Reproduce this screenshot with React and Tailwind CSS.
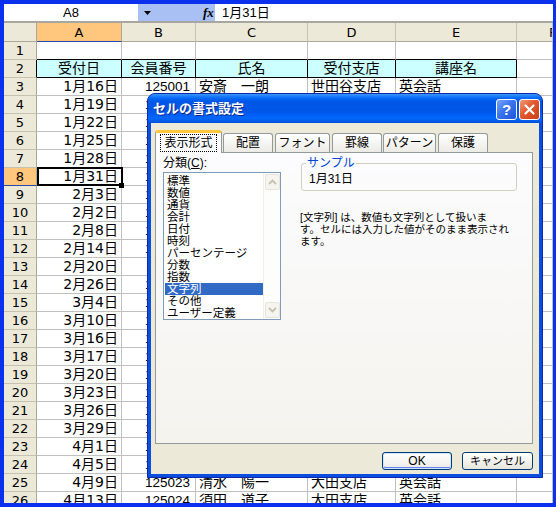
import React from 'react';
import clsx from 'clsx';

const dates = ['1月16日','1月19日','1月22日','1月25日','1月28日','1月31日','2月3日','2月2日','2月8日','2月14日','2月20日','2月26日','3月4日','3月10日','3月16日','3月17日','3月20日','3月23日','3月26日','3月29日','4月1日','4月5日','4月9日','4月13日'];
const extra = {
  3: ['安斎　一朗', '世田谷支店', '英会話'],
  25: ['清水　陽一', '大田支店', '英会話'],
  26: ['須田　道子', '大田支店', '英会話'],
};

const rows = [
  { n: 1, cells: ['', '', '', '', '', ''] },
  { n: 2, cells: ['受付日', '会員番号', '氏名', '受付支店', '講座名', ''] },
  ...dates.map((d, i) => {
    const n = i + 3;
    const e = extra[n] || ['', '', ''];
    return { n, cells: [d, String(125001 + i), e[0], e[1], e[2], ''] };
  }),
];

const cols = ['A', 'B', 'C', 'D', 'E', 'F'];
const listItems = ['標準','数値','通貨','会計','日付','時刻','パーセンテージ','分数','指数','文字列','その他','ユーザー定義'];

function Chevron({ up }) {
  return (
    <svg width="9" height="6" viewBox="0 0 9 6">
      <polyline points={up ? '1,5 4.5,1.5 8,5' : '1,1 4.5,4.5 8,1'} fill="none" stroke="#c5c2b2" strokeWidth="1.8" />
    </svg>
  );
}

function Cell({ r, ci, v }) {
  const isHead = r.n === 2 && ci < 5;
  const isRow1Table = r.n === 1 && ci < 5;
  const selected = r.n === 8 && ci === 0;
  return (
    <div
      className={clsx(
        'flex items-center border-r border-b overflow-hidden whitespace-nowrap leading-[17px] text-black',
        !isHead && ci === 1 ? "text-[13.5px] font-['Liberation_Sans',sans-serif]" : 'text-[14px]',
        isHead && 'bg-[#ccffff] border-r-black border-b-black justify-center',
        isRow1Table && 'border-r-[#c0c0c0] border-b-black',
        !isHead && !isRow1Table && 'border-r-[#c0c0c0] border-b-[#c0c0c0]',
        !isHead && (ci === 0 || ci === 1) && 'justify-end',
        !isHead && ci === 0 && 'pr-[3px]',
        !isHead && ci === 1 && 'pr-[5px]',
        !isHead && ci >= 2 && 'pl-[3px]',
        selected && 'relative z-10 overflow-visible'
      )}
    >
      {v}
      {selected && (
        <>
          <div className="absolute left-0 top-[-1px] right-[-2px] bottom-[-1px] border-2 border-black pointer-events-none" />
          <div className="absolute right-[-3px] bottom-[-3px] w-[5px] h-[5px] bg-black" />
        </>
      )}
    </div>
  );
}

export default function App() {
  return (
    <div className="relative w-[556px] h-[507px] overflow-hidden bg-[#0b31ee] pt-[4px] pl-[4px] pr-[3px] pb-[4px] font-['Liberation_Sans','Noto_Sans_CJK_JP',sans-serif]">
      <div className="w-full h-full bg-white overflow-hidden flex flex-col">
        {/* formula bar */}
        <div className="flex h-[19px] shrink-0 border-b-2 border-b-[#a7a6a0]">
          <div className="w-[134px] bg-white flex items-center justify-center text-[13px] leading-none">A8</div>
          <div className="w-[77px] bg-[#a8c0f4] flex items-center">
            <svg width="7" height="4" viewBox="0 0 7 4" className="ml-[6px]">
              <polygon points="0,0 7,0 3.5,4" fill="#000" />
            </svg>
            <span className="ml-[52px] font-['Liberation_Serif',serif] italic font-bold text-[13px] leading-none">fx</span>
          </div>
          <div className="flex-1 bg-white flex items-center pl-[7px] text-[13px] leading-none">1月31日</div>
        </div>

        <div className="font-['DejaVu_Sans','Noto_Sans_CJK_JP',sans-serif]">
          {/* column header */}
          <div className="grid grid-cols-[33px_85px_74px_112px_88px_121px_36px] h-[19px] shrink-0">
            <div className="bg-[#ece9d8] border-r border-b border-r-[#aca899] border-b-[#aca899]" />
            {cols.map((c) => (
              <div
                key={c}
                className={clsx(
                  'flex items-center border-r border-b text-[13px] leading-none overflow-hidden',
                  c === 'A'
                    ? 'bg-[#ffc67d] border-r-[#aca899] border-b-[#2b47a8]'
                    : 'bg-[#ece9d8] border-r-[#c5c2b2] border-b-[#aca899]',
                  c === 'F' ? 'justify-start pl-[32px]' : 'justify-center'
                )}
              >
                {c}
              </div>
            ))}
          </div>

          {/* body */}
          <div className="grid grid-cols-[33px_85px_74px_112px_88px_121px_36px] auto-rows-[18px]">
            {rows.map((r) => (
              <React.Fragment key={r.n}>
                <div
                  className={clsx(
                    'flex items-center justify-center border-r border-b text-[13px] leading-none',
                    r.n === 8
                      ? 'bg-[#ffc67d] border-r-[#aca899] border-b-[#2b47a8]'
                      : 'bg-[#ece9d8] border-b-[#c5c2b2]',
                    r.n === 2 ? 'border-r-black' : r.n !== 8 && 'border-r-[#aca899]'
                  )}
                >
                  {r.n}
                </div>
                {r.cells.map((v, ci) => (
                  <Cell key={ci} r={r} ci={ci} v={v} />
                ))}
              </React.Fragment>
            ))}
          </div>
        </div>
      </div>

      {/* dialog */}
      <div className="absolute left-[147px] top-[93px] w-[396px] h-[385px] flex flex-col rounded-t-[8px] overflow-hidden bg-[#0b4ddf] border border-[#0a2bb0] font-['Liberation_Sans','Noto_Sans_CJK_JP',sans-serif]">
        <div className="h-[29px] shrink-0 flex items-center pl-[5px] pr-[2px] bg-[linear-gradient(to_bottom,#3d95ff_0%,#1a7dff_8%,#0465f5_16%,#0058e8_26%,#0055e5_55%,#005cf3_70%,#0267fc_82%,#0060f0_90%,#0050d8_100%)]">
          <span className="flex-1 text-white font-bold text-[13px] leading-none [text-shadow:1px_1px_0_#0b2a8f]">セルの書式設定</span>
          <div className="flex gap-[2px] mt-[1px]">
            <div className="w-[21px] h-[21px] rounded-[3px] border border-white bg-[linear-gradient(135deg,#7aa6ff_0%,#3a74ee_45%,#1f55d8_100%)] flex items-center justify-center text-white font-bold text-[15px] leading-none font-['Liberation_Sans',sans-serif]">?</div>
            <div className="w-[21px] h-[21px] rounded-[3px] border border-white bg-[linear-gradient(135deg,#f09a7a_0%,#e2582d_45%,#c8401a_100%)] flex items-center justify-center">
              <svg width="11" height="11" viewBox="0 0 11 11">
                <path d="M1.5 1.5 L9.5 9.5 M9.5 1.5 L1.5 9.5" stroke="#fff" strokeWidth="2.2" strokeLinecap="round" />
              </svg>
            </div>
          </div>
        </div>

        <div className="flex-1 mx-[3px] mb-[3px] bg-[#ece9d8] flex flex-col">
          {/* tabs */}
          <div className="relative z-10 flex items-end h-[22px] mt-[7px] ml-[4px] text-[12px] leading-none text-black">
            <div className="w-[67px] h-[23px] -mb-[1px] bg-[#fcfcfe] border-x border-x-[#919b9c] border-t-[3px] border-t-[#ffc83c] rounded-t-[3px] flex items-center justify-center">
              <span className="border border-dotted border-black px-[3px] py-[1px] leading-[14px]">表示形式</span>
            </div>
            <div className="ml-[1px] w-[50px] h-[19px] border border-b-0 border-[#919b9c] rounded-t-[3px] bg-[linear-gradient(to_bottom,#ffffff,#ecebe5)] flex items-center justify-center">配置</div>
            <div className="ml-[2px] w-[55px] h-[19px] border border-b-0 border-[#919b9c] rounded-t-[3px] bg-[linear-gradient(to_bottom,#ffffff,#ecebe5)] flex items-center justify-center">フォント</div>
            <div className="ml-[2px] w-[50px] h-[19px] border border-b-0 border-[#919b9c] rounded-t-[3px] bg-[linear-gradient(to_bottom,#ffffff,#ecebe5)] flex items-center justify-center">罫線</div>
            <div className="ml-[1px] w-[53px] h-[19px] border border-b-0 border-[#919b9c] rounded-t-[3px] bg-[linear-gradient(to_bottom,#ffffff,#ecebe5)] flex items-center justify-center">パターン</div>
            <div className="ml-[2px] w-[50px] h-[19px] border border-b-0 border-[#919b9c] rounded-t-[3px] bg-[linear-gradient(to_bottom,#ffffff,#ecebe5)] flex items-center justify-center">保護</div>
          </div>

          {/* panel */}
          <div className="ml-[4px] w-[378px] h-[292px] shrink-0 border border-[#919b9c] bg-[linear-gradient(to_bottom,#fcfcfe,#f4f3ee)] flex pl-[7px] pt-[2px] text-black">
            <div className="w-[118px] flex flex-col">
              <div className="h-[17px] text-[12px] leading-[17px]">
                分類(<span className="underline">C</span>):
              </div>
              <div className="h-[148px] border border-[#7f9db9] bg-white flex">
                <div className="flex-1 pt-[2px] pl-[1px]">
                  {listItems.map((it) => (
                    <div
                      key={it}
                      className={clsx(
                        'h-[12px] text-[11.5px] leading-[12px] pl-[2px] whitespace-nowrap overflow-hidden',
                        it === '文字列' ? 'bg-[#316ac5] text-white' : 'text-black'
                      )}
                    >
                      {it}
                    </div>
                  ))}
                </div>
                <div className="w-[17px] bg-[#fdfdfb] border-l border-l-[#f0efe8] flex flex-col justify-between py-[1px] pr-[1px]">
                  <div className="h-[16px] w-[15px] ml-[1px] rounded-[2px] border border-[#e8e6dc] bg-[#f5f4ee] flex items-center justify-center">
                    <Chevron up />
                  </div>
                  <div className="h-[16px] w-[15px] ml-[1px] rounded-[2px] border border-[#e8e6dc] bg-[#f5f4ee] flex items-center justify-center">
                    <Chevron />
                  </div>
                </div>
              </div>
            </div>

            <div className="ml-[20px] w-[216px] flex flex-col">
              <fieldset className="mt-[2px] border border-[#d0d0bf] rounded-[3px] px-[4px]">
                <legend className="px-[1px] text-[12px] leading-[12px] text-[#0046d5]">サンプル</legend>
                <div className="h-[21px] leading-[21px] text-[12px] pl-[3px]">1月31日</div>
              </fieldset>
              <div className="mt-[20px] text-[10.5px] leading-[12px] whitespace-nowrap -ml-[1px]">
                [文字列] は、数値も文字列として扱いま<br />
                す。セルには入力した値がそのまま表示され<br />
                ます。
              </div>
            </div>
          </div>

          {/* buttons */}
          <div className="flex justify-end gap-[10px] mt-[8px] pr-[6px] text-[12px] leading-none text-black">
            <div className="w-[70px] h-[18px] rounded-[3px] border border-[#003c74] bg-[linear-gradient(to_bottom,#ffffff,#ecebe6)] shadow-[inset_0_0_0_1px_#cee7ff,inset_0_-1px_0_1px_#6982ee] flex items-center justify-center">OK</div>
            <div className="w-[71px] h-[18px] rounded-[3px] border border-[#003c74] bg-[linear-gradient(to_bottom,#ffffff,#e6e5dd)] flex items-center justify-center text-[11px]">キャンセル</div>
          </div>
        </div>
      </div>
    </div>
  );
}
